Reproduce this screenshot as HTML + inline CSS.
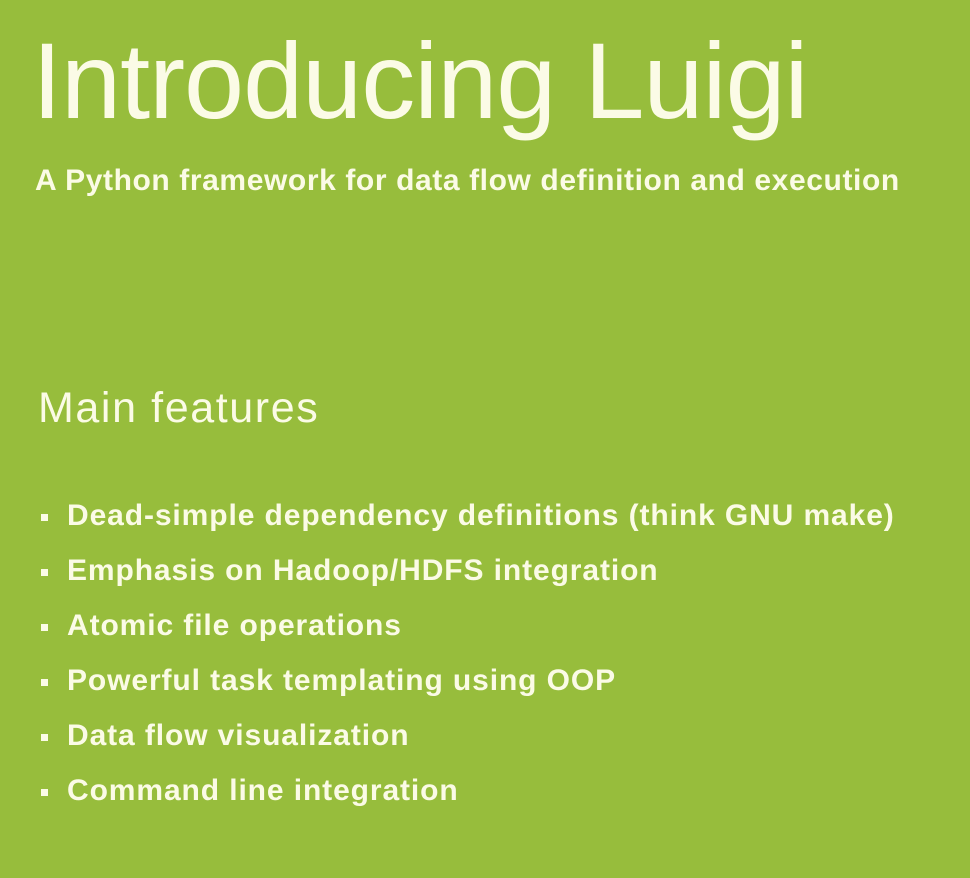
<!DOCTYPE html>
<html><head><style>
body{margin:0;width:970px;height:878px;background:#97bd3c;overflow:hidden;font-family:"Liberation Sans",sans-serif;color:#fbfbe6;position:relative}
div{position:absolute;white-space:nowrap}
.t{left:32px;top:22px;font-size:108px;font-weight:normal;letter-spacing:-1px;line-height:1.1}
.s{left:35px;top:164px;font-size:30px;font-weight:bold;letter-spacing:0.6px}
.m{left:38px;top:384px;font-size:43px;letter-spacing:1.6px}
.b{left:67px;font-size:30px;font-weight:bold;letter-spacing:0.9px}
.b:before{content:"";position:absolute;left:-26px;top:15px;width:7px;height:7px;background:#fbfbe6}
</style></head><body>
<div class="t">Introducing Luigi</div>
<div class="s">A Python framework for data flow definition and execution</div>
<div class="m">Main features</div>
<div class="b" style="top:499px">Dead-simple dependency definitions (think GNU make)</div>
<div class="b" style="top:554px">Emphasis on Hadoop/HDFS integration</div>
<div class="b" style="top:609px">Atomic file operations</div>
<div class="b" style="top:664px">Powerful task templating using OOP</div>
<div class="b" style="top:719px">Data flow visualization</div>
<div class="b" style="top:774px">Command line integration</div>
</body></html>
